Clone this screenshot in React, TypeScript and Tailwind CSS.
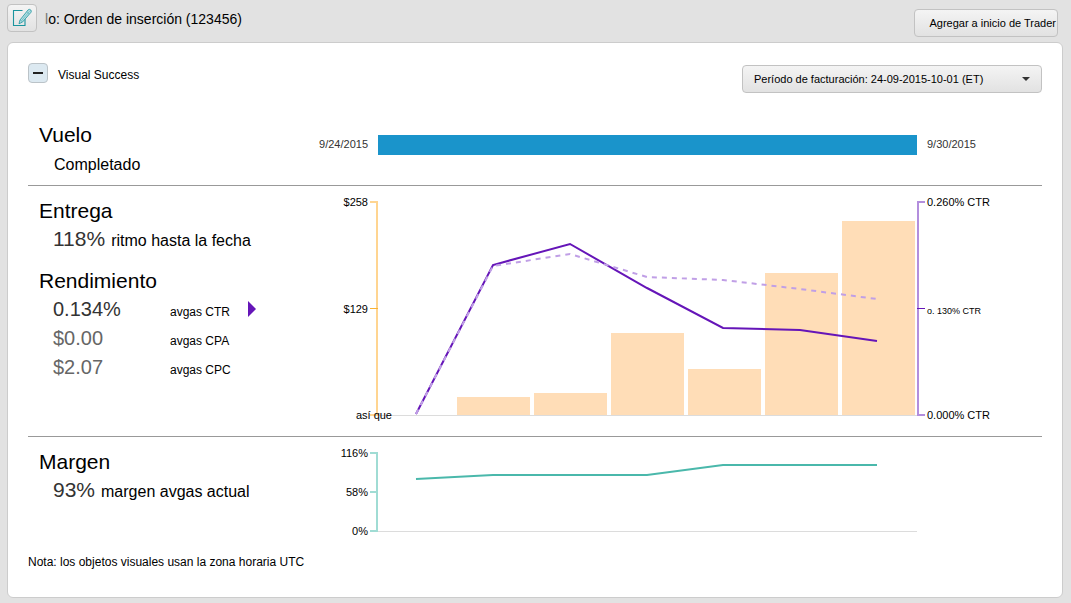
import type { ReactNode } from 'react'
import { clsx } from 'clsx'

const X = [48, 125, 202, 279, 355, 432, 509]
const CTR = [220, 71, 50, 94, 134, 136, 147]
const CTR_AVG = [220, 72, 60, 83, 86, 95, 105]
const MARGIN = [34, 30, 30, 30, 20, 20, 20]

const SPEND = [
  { x: 89, h: 18 },
  { x: 166, h: 22 },
  { x: 243, h: 82 },
  { x: 320, h: 46 },
  { x: 397, h: 142 },
  { x: 474, h: 194 },
]

const METRICS = [
  { value: '0.134%', label: 'avgas CTR', active: true },
  { value: '$0.00', label: 'avgas CPA', active: false },
  { value: '$2.07', label: 'avgas CPC', active: false },
]

const toPoints = (ys: number[]) => ys.map((y, i) => `${X[i]},${y}`).join(' ')

function EditIcon() {
  return (
    <svg width="20" height="20" viewBox="0 0 20 20" fill="none" stroke="#1a949e">
      <path d="M10.5 2.5H1.5V17.5H13V11" strokeWidth="1.1" />
      <path d="M8 12L16.2 1.8Q17.5 0.8 18.8 2Q19.8 3.2 18.9 4.4L10.5 14L7 15.8Z" fill="#b5dfe3" strokeWidth="0.8" />
      <path d="M9.3 13L17.6 3.2M8 12L10.5 14M14.8 3.6L17.2 6" stroke="#5fb4bb" strokeWidth="0.7" />
    </svg>
  )
}

function Section({ left, children, className }: { left: ReactNode; children: ReactNode; className?: string }) {
  return (
    <section className={clsx('grid grid-cols-[280px_60px_minmax(0,1fr)_116px] items-start', className)}>
      <div className="pl-[11px]">{left}</div>
      {children}
    </section>
  )
}

function Title({ children }: { children: ReactNode }) {
  return <h2 className="text-[21px] leading-6">{children}</h2>
}

function Stat({ value, label }: { value: string; label: string }) {
  return (
    <p className="mt-1 flex items-baseline pl-[14px] text-base leading-6">
      <span className="text-[21px] leading-6 text-[#333]">{value}</span>
      <span className="ml-[6px]">{label}</span>
    </p>
  )
}

function DeliveryChart() {
  return (
    <svg className="block h-[229px] w-full" viewBox="0 0 558 229" preserveAspectRatio="none" fill="none">
      {SPEND.map(b => (
        <rect key={b.x} x={b.x} y={221 - b.h} width="73" height={b.h} fill="#ffddb7" />
      ))}
      <path d="M10 221.5H549" stroke="#dcdcdc" />
      <path d="M2 8H9V221H2" stroke="#ffd591" strokeWidth="2" />
      <path d="M2 114.5H10" stroke="#f9b233" />
      <path d="M557 8H550V221H557" stroke="#b38edd" strokeWidth="2" />
      <path d="M549 114.5H557" stroke="#6515b8" />
      <polyline points={toPoints(CTR)} stroke="#6515b8" strokeWidth="2" />
      <polyline points={toPoints(CTR_AVG)} stroke="#c09fe6" strokeWidth="2" strokeDasharray="5 5" />
    </svg>
  )
}

function MarginChart() {
  return (
    <svg className="block h-[94px] w-full" viewBox="0 0 558 94" preserveAspectRatio="none" fill="none">
      <path d="M10 86.5H549" stroke="#dcdcdc" />
      <path d="M2 8H9V86H2M2 47H9" stroke="#a0dcd4" strokeWidth="2" />
      <polyline points={toPoints(MARGIN)} stroke="#4ab8ab" strokeWidth="2" />
    </svg>
  )
}

export default function App() {
  return (
    <div className="min-h-screen bg-[#e2e2e2] pb-[5px] font-['Liberation_Sans',Arial,sans-serif] text-black">
      <header className="flex h-[42px] items-start justify-between pl-[7px] pr-[13px]">
        <div className="flex items-center gap-2 pt-1">
          <button
            type="button"
            aria-label="Editar"
            className="flex h-7 w-[30px] items-center justify-center rounded border border-[#c2c2c2] bg-linear-to-b from-[#f4f4f4] to-[#e2e2e2]"
          >
            <EditIcon />
          </button>
          <h1 className="pt-0.5 text-sm"><span className="text-[#777]">l</span>o: Orden de inserción (123456)</h1>
        </div>
        <button
          type="button"
          className="mt-[9px] h-7 rounded border border-[#c2c2c2] bg-linear-to-b from-[#f4f4f4] to-[#e2e2e2] pl-[14px] pr-px text-[11px] whitespace-nowrap"
        >
          Agregar a inicio de Trader
        </button>
      </header>

      <main className="ml-[7px] mr-2 rounded-md border border-[#ccc] bg-white px-5 pt-5 pb-[27px]">
        <div className="flex h-[30px] justify-between">
          <div className="flex items-start gap-[10px]">
            <button
              type="button"
              aria-label="Contraer"
              className="flex size-5 items-center justify-center rounded border border-[#bbc3c8] bg-[#dce9f1]"
            >
              <span className="h-0.5 w-[10px] bg-[#222]" />
            </button>
            <span className="text-xs leading-6">Visual Success</span>
          </div>
          <div className="grid w-[300px] items-center self-end">
            <select
              aria-label="Período de facturación"
              className="col-start-1 row-start-1 h-7 w-full appearance-none rounded border border-[#c2c2c2] bg-linear-to-b from-[#f4f4f4] to-[#e2e2e2] pl-[11px] text-[11px]"
            >
              <option>Período de facturación: 24-09-2015-10-01 (ET)</option>
            </select>
            <svg className="pointer-events-none col-start-1 row-start-1 mr-3 justify-self-end" width="8" height="4" viewBox="0 0 8 4">
              <path d="M0 0H8L4 4Z" fill="#333" />
            </svg>
          </div>
        </div>

        <Section
          className="border-b border-[#999] pt-[30px] pb-2"
          left={
            <>
              <Title>Vuelo</Title>
              <p className="mt-[6px] pl-[15px] text-base leading-6">Completado</p>
            </>
          }
        >
          <span className="mt-3 text-right text-[11px] leading-[18px] text-[#333]">9/24/2015</span>
          <div className="ml-[10px] mr-[9px] mt-3 h-5 bg-[#1a94cb]" />
          <span className="mt-3 pl-px text-[11px] leading-[18px] text-[#333]">9/30/2015</span>
        </Section>

        <Section
          className="border-b border-[#999] pt-2 pb-[13px]"
          left={
            <div className="pt-[5px]">
              <Title>Entrega</Title>
              <Stat value="118%" label="ritmo hasta la fecha" />
              <div className="mt-4">
                <Title>Rendimiento</Title>
              </div>
              <ul className="mt-1 flex flex-col gap-[5px] pl-[14px]">
                {METRICS.map(m => (
                  <li key={m.label} className="flex h-6 items-center">
                    <span className={clsx('w-[117px] text-xl leading-6', m.active ? 'text-[#333]' : 'text-[#666]')}>
                      {m.value}
                    </span>
                    <span className="w-16 pt-1.5 text-xs">{m.label}</span>
                    {m.active && (
                      <svg className="ml-[14px]" width="8" height="16" viewBox="0 0 8 16">
                        <path d="M0 0L8 8L0 16Z" fill="#6515b8" />
                      </svg>
                    )}
                  </li>
                ))}
              </ul>
            </div>
          }
        >
          <div className="z-10 flex h-[229px] flex-col items-end justify-between text-[11px] leading-4">
            <span>$258</span>
            <span>$129</span>
            <span className="-mr-6 whitespace-nowrap">así que</span>
          </div>
          <DeliveryChart />
          <div className="flex h-[229px] flex-col justify-between pl-px text-[11px] leading-4">
            <span>0.260% CTR</span>
            <span className="pt-1 text-[9px] leading-4">o. 130% CTR</span>
            <span>0.000% CTR</span>
          </div>
        </Section>

        <Section
          className="pt-2"
          left={
            <div className="pt-[5px]">
              <Title>Margen</Title>
              <Stat value="93%" label="margen avgas actual" />
            </div>
          }
        >
          <div className="flex h-[94px] flex-col items-end justify-between text-[11px] leading-4">
            <span>116%</span>
            <span>58%</span>
            <span>0%</span>
          </div>
          <MarginChart />
        </Section>

        <p className="mt-[15px] text-xs leading-4">Nota: los objetos visuales usan la zona horaria UTC</p>
      </main>
    </div>
  )
}
